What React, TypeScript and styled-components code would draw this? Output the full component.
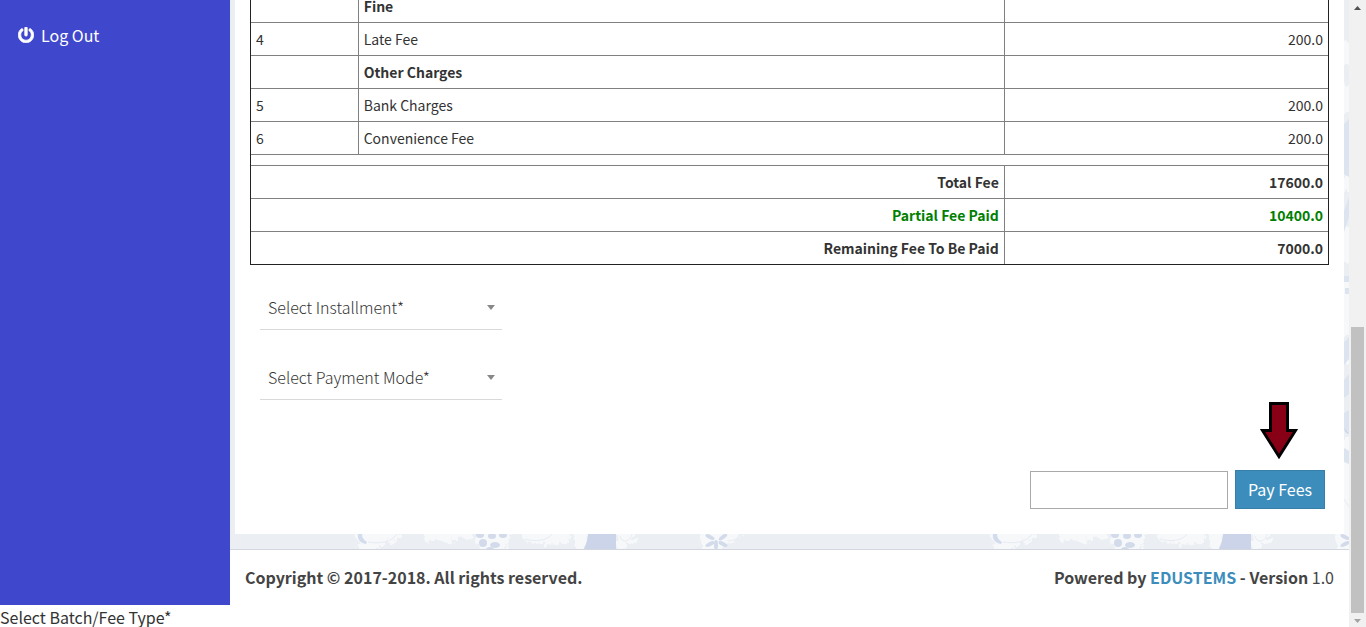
import React from "react";
import styled, { createGlobalStyle } from "styled-components";
import { FaPowerOff } from "react-icons/fa";

const GlobalStyle = createGlobalStyle`
  *, *::before, *::after { box-sizing: border-box; }
  body {
    margin: 0;
    background: #fff;
    color: #333;
    font-family: "Noto Sans CJK JP", "Noto Sans", sans-serif;
    font-size: 16px;
    line-height: 22px;
  }
  input, select, button { font: inherit; color: inherit; margin: 0; border-radius: 0; }
  a { text-decoration: none; }
`;

const Page = styled.div`
  display: flex;
  min-height: 100vh;
  overflow: hidden;
`;

const Document = styled.div`
  flex: 1;
  min-width: 0;
  display: flex;
  flex-direction: column;
`;

const Shell = styled.div`
  flex: 1;
  display: flex;
`;

const Sidebar = styled.nav`
  flex: 0 0 230px;
  background: #3f48cc;
  padding: 24px 18px;
`;

const SidebarLink = styled.a`
  display: flex;
  align-items: center;
  gap: 7px;
  color: #fff;

  svg {
    stroke: currentColor;
    stroke-width: 24;
  }
`;

const Main = styled.div`
  flex: 1;
  min-width: 0;
  display: flex;
  flex-direction: column;
`;

const Content = styled.main`
  position: relative;
  flex: 1;
  display: flex;
  flex-direction: column;
  padding: 0 5px 15px;
  background: #ebeff4;
`;

const Backdrop = styled.svg`
  position: absolute;
  inset: 0;
  width: 100%;
  height: 100%;
`;

const Panel = styled.section`
  position: relative;
  flex: 1;
  display: flex;
  flex-direction: column;
  padding: 0 15px 25px;
  background: #fff;
`;

const FeeTable = styled.table`
  width: 100%;
  margin-top: -11px;
  table-layout: fixed;
  border-collapse: separate;
  border-spacing: 0;
  border: 1px solid #222;
  font-size: 14px;
  line-height: 22px;
`;

const Column = styled.col<{ $share: number }>`
  width: ${(p) => p.$share}%;
`;

const Cell = styled.td<{ $align?: "left" | "right"; $strong?: boolean; $paid?: boolean }>`
  height: 33px;
  padding: 5px;
  border: 0 solid #808080;
  border-bottom-width: 1px;
  border-right-width: 1px;
  text-align: ${(p) => p.$align ?? "left"};
  font-weight: ${(p) => (p.$strong ? 700 : 400)};
  color: ${(p) => (p.$paid ? "#008000" : "#333")};

  &:last-child { border-right-width: 0; }
  tr:last-child > & { height: 32px; border-bottom-width: 0; }
`;

const SpacerCell = styled.td`
  height: 11px;
  padding: 0;
  border-bottom: 1px solid #808080;
`;

const Fields = styled.div`
  display: flex;
  flex-direction: column;
  gap: 26px;
  padding: 21px 10px 70px;
`;

const SelectBox = styled.div`
  position: relative;
  width: 242px;
`;

const Select = styled.select`
  display: block;
  width: 100%;
  height: 44px;
  padding: 0 24px 2px 8px;
  appearance: none;
  background: transparent;
  border: 0;
  border-bottom: 1px solid #d9d9d9;
  font-weight: 300;
`;

const Caret = styled.svg`
  position: absolute;
  right: 7px;
  top: 19px;
  pointer-events: none;
`;

const Actions = styled.div`
  display: flex;
  justify-content: flex-end;
  align-items: flex-end;
  gap: 7px;
  padding-right: 4px;
`;

const AmountInput = styled.input`
  width: 198px;
  height: 38px;
  padding: 0 8px;
  background: #fff;
  border: 1px solid #a9a9a9;
`;

const PayBox = styled.div`
  position: relative;
`;

const PayButton = styled.button`
  display: block;
  width: 90px;
  height: 39px;
  padding: 0 0 2px;
  background: #3c8dbc;
  border: 1px solid #367fa9;
  color: #fff;
`;

const Pointer = styled.svg`
  position: absolute;
  left: 25px;
  bottom: 50px;
`;

const Footer = styled.footer`
  display: flex;
  justify-content: space-between;
  padding: 16px 15px 17px;
  border-top: 1px solid #d2d6de;
  background: #fff;
  color: #444;
`;

const BrandLink = styled.a`
  color: #3c8dbc;
`;

const BatchLabel = styled.div`
  height: 22px;
  line-height: 24px;
`;

const ScrollTrack = styled.div`
  flex: 0 0 17px;
  display: flex;
  flex-direction: column;
  background: #f1f1f1;
`;

const ScrollArrow = styled.svg`
  flex: none;
`;

const ScrollRail = styled.div`
  flex: 1;
  display: flex;
  flex-direction: column;
  justify-content: flex-end;
  padding: 0 2px;
`;

const ScrollThumb = styled.div`
  height: 48%;
  background: #c1c1c1;
`;

type Row = { no?: string; title: string; amount?: string };

const rows: Row[] = [
  { title: "Fine" },
  { no: "4", title: "Late Fee", amount: "200.0" },
  { title: "Other Charges" },
  { no: "5", title: "Bank Charges", amount: "200.0" },
  { no: "6", title: "Convenience Fee", amount: "200.0" },
];

const totals = [
  { title: "Total Fee", amount: "17600.0" },
  { title: "Partial Fee Paid", amount: "10400.0", paid: true },
  { title: "Remaining Fee To Be Paid", amount: "7000.0" },
];

function FloralBackdrop() {
  return (
    <Backdrop aria-hidden="true">
      <defs>
        <filter id="ragged" x="-5%" y="-5%" width="110%" height="110%">
          <feTurbulence type="fractalNoise" baseFrequency="0.2" numOctaves="2" seed="4" />
          <feDisplacementMap in="SourceGraphic" scale="12" />
        </filter>
        <pattern id="floral" width="635" height="560" patternUnits="userSpaceOnUse">
          <g fill="#f6f8fa" filter="url(#ragged)">
            <path d="M124 528h48l-3 8-7 6-12 5-6 6h-18l4-10-5-6z" />
            <path d="M193 528h50l-2 10-14 1-8 5-11-4-13 2z" />
            <path d="M245 528h40l-6 10-4 18h-26z" />
            <path d="M291 528h48l1 10-6 6-22 1-17-4z" />
            <path d="M342 528h17l-4 28h-8z" />
            <path d="M386 528h23l-4 12-8 4-3 12h-8z" />
            <path d="M471 528h42l-5 10-12 6-3 12h-21z" />
            <path d="M474 43h15v22h-15zM474 84h15v28h-15zM474 178h15v14h-15zM474 228h15v34h-15zM474 278h15v60h-15zM474 345h15v18h-15zM474 440h15v90h-15z" />
          </g>
          <g fill="#cbd4e8">
            <path d="M128 534c-1 5 2 9 8 10l1-2c-3-2-5-4-5-8z" opacity=".8" />
            <path d="M358 534h28v15h-32c2-5 4-10 4-15z" />
            <ellipse cx="484" cy="427" rx="5" ry="7" />
          </g>
          <g fill="#d3dbeb">
            <ellipse cx="250" cy="535" rx="4" ry="3" />
            <ellipse cx="262" cy="536" rx="4" ry="3" />
            <ellipse cx="273" cy="535" rx="4" ry="3" />
            <ellipse cx="253" cy="543" rx="4" ry="4" />
            <ellipse cx="265" cy="545" rx="5" ry="3" />
            <ellipse cx="260" cy="550" rx="4" ry="3" />
            <ellipse cx="480" cy="537" rx="5" ry="2" transform="rotate(28 480 537)" />
            <ellipse cx="493" cy="537" rx="5" ry="2" transform="rotate(-38 493 537)" />
            <ellipse cx="480" cy="544" rx="5" ry="2" transform="rotate(-28 480 544)" />
            <ellipse cx="493" cy="544" rx="5" ry="2" transform="rotate(28 493 544)" />
            <ellipse cx="486" cy="545" rx="2" ry="5" />
          </g>
          <g fill="#dce4f0">
            <path d="M479 124l5-5v58l-5-3z" />
            <path d="M479 211l5-14v20l-5 15z" />
            <path d="M479 276h5v6h-5zM480 288h4v6h-4z" />
            <path d="M479 342l5-5v22l-5 6zM479 380l5-6v20l-5 4z" />
            <path d="M479 413l5-3v24l-5-6z" />
            <path d="M479 448l5 3v13l-5-2z" />
          </g>
          <g fill="none" stroke="#e7ecf4">
            <path d="M138 542c12 2 24 0 29-8M295 539c10 3 22 2 27-5M390 536c2 8 10 6 12-2M498 541c6 0 11-3 12-7M479 70l5 9M479 499l5 8" />
          </g>
        </pattern>
      </defs>
      <rect width="100%" height="100%" fill="url(#floral)" />
    </Backdrop>
  );
}

function SelectField({ label, options }: { label: string; options: string[] }) {
  return (
    <SelectBox>
      <Select aria-label={label} defaultValue="">
        <option value="">{label}</option>
        {options.map((o) => (
          <option key={o}>{o}</option>
        ))}
      </Select>
      <Caret width="8" height="5" aria-hidden="true">
        <path d="M0 0h8L4 5z" fill="#888" />
      </Caret>
    </SelectBox>
  );
}

export default function App() {
  return (
    <>
      <GlobalStyle />
      <Page>
        <Document>
          <Shell>
            <Sidebar>
              <SidebarLink href="#logout">
                <FaPowerOff size={16} aria-hidden="true" />
                Log Out
              </SidebarLink>
            </Sidebar>
            <Main>
              <Content>
                <FloralBackdrop />
                <Panel>
                  <FeeTable>
                    <colgroup>
                      <Column $share={10} />
                      <Column $share={60} />
                      <Column $share={30} />
                    </colgroup>
                    <tbody>
                      {rows.map((r) => (
                        <tr key={r.title}>
                          <Cell>{r.no}</Cell>
                          <Cell $strong={!r.no}>{r.title}</Cell>
                          <Cell $align="right">{r.amount}</Cell>
                        </tr>
                      ))}
                      <tr>
                        <SpacerCell colSpan={3} />
                      </tr>
                      {totals.map((t) => (
                        <tr key={t.title}>
                          <Cell colSpan={2} $align="right" $strong $paid={t.paid}>
                            {t.title}
                          </Cell>
                          <Cell $align="right" $strong $paid={t.paid}>
                            {t.amount}
                          </Cell>
                        </tr>
                      ))}
                    </tbody>
                  </FeeTable>
                  <Fields>
                    <SelectField label="Select Installment*" options={["1", "2"]} />
                    <SelectField label="Select Payment Mode*" options={["Cash", "Online"]} />
                  </Fields>
                  <Actions>
                    <AmountInput type="text" aria-label="Amount" />
                    <PayBox>
                      <PayButton type="button">Pay Fees</PayButton>
                      <Pointer width="38" height="57" aria-hidden="true">
                        <path
                          d="M10.500 1.500H27.500V28.500H35.500L19 54.500L2.500 28.500H10.500Z"
                          fill="#880015"
                          stroke="#000"
                          strokeWidth="3"
                        />
                      </Pointer>
                    </PayBox>
                  </Actions>
                </Panel>
              </Content>
              <Footer>
                <strong>Copyright © 2017-2018. All rights reserved.</strong>
                <div>
                  <strong>
                    Powered by <BrandLink href="#edustems">EDUSTEMS</BrandLink> - Version
                  </strong>{" "}
                  1.0
                </div>
              </Footer>
            </Main>
          </Shell>
          <BatchLabel>Select Batch/Fee Type*</BatchLabel>
        </Document>
        <ScrollTrack aria-hidden="true">
          <ScrollArrow width="17" height="17">
            <path d="M5 10h7L8.500 6z" fill="#505050" />
          </ScrollArrow>
          <ScrollRail>
            <ScrollThumb />
          </ScrollRail>
          <ScrollArrow width="17" height="14">
            <path d="M5 6h7L8.500 10z" fill="#a3a3a3" />
          </ScrollArrow>
        </ScrollTrack>
      </Page>
    </>
  );
}
